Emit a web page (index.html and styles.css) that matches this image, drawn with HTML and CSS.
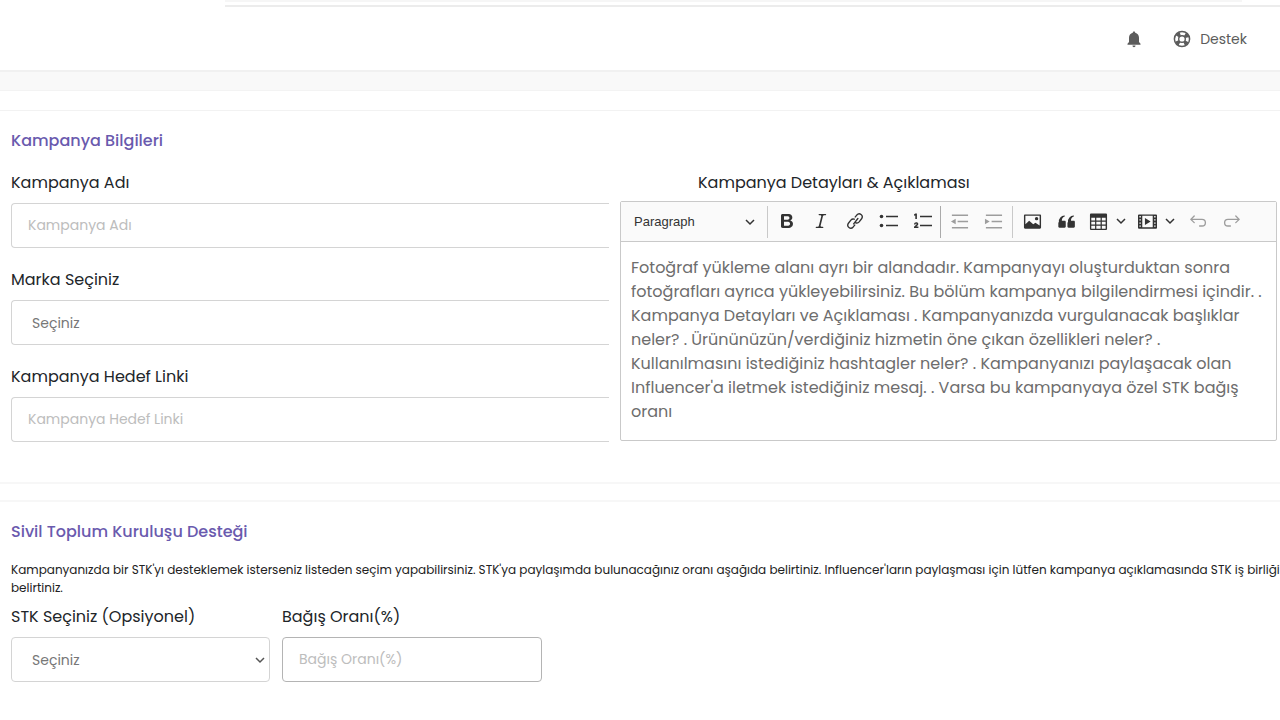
FILE: index.html
```html
<!DOCTYPE html>
<html lang="tr">
<head>
<meta charset="utf-8">
<meta name="viewport" content="width=device-width, initial-scale=1">
<title>Kampanya Bilgileri</title>
<link rel="stylesheet" href="styles.css">
</head>
<body>
<div class="tabstrip"><div class="tabstrip-inner"></div></div>
<header class="topbar">
  <button class="bell" type="button" aria-label="Bildirimler">
    <svg width="16" height="18" viewBox="0 0 16 18"><path d="M8 1.500c.8 0 1.200.5 1.200 1.200C11.600 3.200 13 5.200 13 7.700v4.300l1.500 1.800v.9h-13v-.9L3 12V7.700c0-2.500 1.400-4.500 3.800-5C6.800 2 7.200 1.500 8 1.500zM6.500 15.500h3c0 1-.6 1.700-1.500 1.700s-1.500-.7-1.500-1.700z" fill="#5c5c5c"/></svg>
  </button>
  <a class="support" href="#">
    <svg width="18" height="18" viewBox="0 0 18 18" fill="none" stroke="#5c5c5c"><circle cx="9" cy="9" r="7.600" stroke-width="1.500"/><circle cx="9" cy="9" r="3.300" stroke-width="1.400"/><circle cx="9" cy="9" r="5.500" stroke-width="3.800" stroke-dasharray="3.600 5.040" stroke-dashoffset="-2.520"/></svg>
    <span>Destek</span>
  </a>
</header>
<div class="band"></div>
<main>
  <section class="card details">
    <h2>Kampanya Bilgileri</h2>
    <div class="columns">
      <div class="fields">
        <div class="field">
          <label for="name">Kampanya Adı</label>
          <input class="control cut" id="name" type="text" placeholder="Kampanya Adı">
        </div>
        <div class="field">
          <label for="brand">Marka Seçiniz</label>
          <select class="control cut" id="brand"><option>Seçiniz</option></select>
        </div>
        <div class="field">
          <label for="link">Kampanya Hedef Linki</label>
          <input class="control cut" id="link" type="text" placeholder="Kampanya Hedef Linki">
        </div>
      </div>
      <div class="editor-column">
        <span class="editor-label" id="editor-label">Kampanya Detayları &amp; Açıklaması</span>
        <div class="editor">
          <div class="toolbar" role="toolbar" aria-label="Metin araçları">
            <button class="style-menu" type="button"><span>Paragraph</span><svg class="chevron" viewBox="0 0 10 10"><path d="M1 3l4 4 4-4"/></svg></button>
            <span class="rule"></span>
            <button class="tool" type="button" aria-label="Bold"><svg class="big" viewBox="0 0 20 20"><path d="M10.187 17H5.773c-.637 0-1.092-.138-1.364-.415-.273-.277-.409-.718-.409-1.323V4.738c0-.617.140-1.062.419-1.332.279-.27.730-.406 1.354-.406h4.680c.690 0 1.288.041 1.793.124.506.083.960.242 1.360.478.341.197.644.447.906.750a3.262 3.262 0 0 1 .808 2.162c0 1.401-.722 2.426-2.167 3.075C15.050 10.175 16 11.315 16 13.010a3.756 3.756 0 0 1-2.296 3.504 6.100 6.100 0 0 1-1.517.377c-.571.073-1.238.110-2 .110zm-.217-6.217H7v4.087h3.069c1.977 0 2.965-.690 2.965-2.072 0-.707-.256-1.220-.768-1.537-.512-.319-1.277-.478-2.296-.478zM7 5.130v3.619h2.606c.729 0 1.292-.067 1.690-.200a1.600 1.600 0 0 0 .910-.765c.165-.267.247-.566.247-.897 0-.707-.260-1.176-.778-1.409-.519-.232-1.310-.348-2.375-.348H7z"/></svg></button>
            <button class="tool" type="button" aria-label="Italic"><svg class="big" viewBox="0 0 20 20"><path d="M9.586 14.633l.021.004c-.036.335.095.655.393.962.082.083.173.150.274.201h1.474a.6.6 0 1 1 0 1.200H5.304a.6.6 0 0 1 0-1.200h1.150c.474-.070.809-.182 1.005-.334.157-.122.291-.320.404-.597l2.416-9.550a1.053 1.053 0 0 0-.281-.823 1.120 1.120 0 0 0-.442-.296H8.150a.6.6 0 0 1 0-1.200h6.443a.6.6 0 1 1 0 1.200h-1.195c-.376.056-.650.155-.823.296-.215.175-.423.439-.623.790l-2.366 9.347z"/></svg></button>
            <button class="tool" type="button" aria-label="Link"><svg class="line" viewBox="0 0 20 20"><path d="M8.500 13.200l4.700-6M10.300 5.500l1.700-2.100c3-3.300 7.800.5 5.300 4.100l-2.700 3.500c-1 1.200-2.500 1.500-3.800 1M9.700 14.500L8 16.600c-3 3.300-7.800-.5-5.300-4.100L5.400 9c1-1.200 2.500-1.500 3.800-1"/></svg></button>
            <button class="tool" type="button" aria-label="Bulleted list"><svg class="big" viewBox="0 0 20 20"><circle cx="2.500" cy="5.500" r="1.800"/><circle cx="2.500" cy="14.500" r="1.800"/><path d="M7 4.700h12v1.600H7zM7 13.700h12v1.600H7z"/></svg></button>
            <button class="tool" type="button" aria-label="Numbered list"><svg class="big" viewBox="0 0 20 20"><path d="M7 4.700h12v1.600H7zM7 13.700h12v1.600H7zM2.400 2.500h1.500v5.600H2.300V4.400l-1.200.4V3.300zM1 13.400c.1-1.500 1-2.200 2.200-2.200s2.100.7 2.100 1.700c0 .8-.4 1.300-1.900 2.500h2V17H1v-1.300c2-1.600 2.500-2.100 2.500-2.600 0-.7-.9-.7-1 .3z"/></svg></button>
            <span class="rule dark"></span>
            <button class="tool" type="button" aria-label="Decrease indent" disabled><svg viewBox="0 0 20 20"><path d="M2 2.700h17v1.600H2zM8 9.200h11v1.600H8zM2 15.700h17v1.600H2zM6 7v6l-5-3z"/></svg></button>
            <button class="tool" type="button" aria-label="Increase indent" disabled><svg viewBox="0 0 20 20"><path d="M2 2.700h17v1.600H2zM8 9.200h11v1.600H8zM2 15.700h17v1.600H2zM1 7v6l5-3z"/></svg></button>
            <span class="rule end"></span>
            <button class="tool" type="button" aria-label="Image"><svg viewBox="0 0 20 20"><path fill-rule="evenodd" d="M2.200 2.500h15.600c.8 0 1.200.4 1.200 1.200v12.600c0 .8-.4 1.200-1.200 1.200H2.200c-.8 0-1.200-.4-1.200-1.200V3.700c0-.8.400-1.200 1.200-1.200zM2.500 4v8.800l4-3.600 4.300 3.700 2.300-1.700 4.400 3V4zM14.300 5.200a1.800 1.800 0 1 1 0 3.600 1.800 1.800 0 0 1 0-3.600z"/></svg></button>
            <button class="tool" type="button" aria-label="Block quote"><svg viewBox="0 0 20 20"><path d="M2 10.400a6.200 6.200 0 0 1 5.800-6.700c.7 0 .8.900.1 1.100-2.100.6-2.900 2.600-2.800 4.400H8c.8 0 1.200.4 1.200 1.200V15.300c0 .8-.4 1.200-1.200 1.200H2.600c-.8 0-1.200-.4-1.200-1.200v-3.700c0-.5.200-.9.600-1.200zM11.600 10.400a6.200 6.200 0 0 1 5.800-6.700c.7 0 .8.900.1 1.100-2.100.6-2.900 2.600-2.800 4.400h2.900c.8 0 1.200.4 1.200 1.200V15.300c0 .8-.4 1.200-1.200 1.200h-5.400c-.8 0-1.200-.4-1.200-1.200v-3.700c0-.5.200-.9.600-1.200z"/></svg></button>
            <button class="tool split" type="button" aria-label="Insert table"><svg viewBox="0 0 20 20"><path fill-rule="evenodd" d="M2.500 1.500h15c1 0 1.500.5 1.500 1.500v14.600c0 .9-.5 1.400-1.500 1.400h-15c-1 0-1.500-.5-1.500-1.400V3C1 2 1.500 1.500 2.500 1.500zM2.400 6v2.900h4V6zM7.700 6v2.900h4.500V6zM13.500 6v2.900h4V6zM2.400 10.200v3h4v-3zM7.700 10.200v3h4.500v-3zM13.500 10.200v3h4v-3zM2.400 14.500v3h4v-3zM7.700 14.500v3h4.500v-3zM13.500 14.500v3h4v-3z"/></svg><svg class="chevron" viewBox="0 0 10 10"><path d="M1 3l4 4 4-4"/></svg></button>
            <button class="tool split" type="button" aria-label="Insert media"><svg viewBox="0 0 20 20"><path fill-rule="evenodd" d="M1 2.500h18c.6 0 1 .4 1 1v13c0 .6-.4 1-1 1H1c-.6 0-1-.4-1-1v-13c0-.6.400-1 1-1zM4.500 4v12h11V4zM1.500 4.300v1.400H3V4.300zM1.500 7.600V9H3V7.600zM1.500 11v1.400H3V11zM1.500 14.200v1.400H3v-1.400zM17 4.300v1.400h1.500V4.300zM17 7.600V9h1.500V7.600zM17 11v1.400h1.500V11zM17 14.200v1.400h1.500v-1.400zM7.300 6.300v7.400l6-3.700z"/></svg><svg class="chevron" viewBox="0 0 10 10"><path d="M1 3l4 4 4-4"/></svg></button>
            <button class="tool" type="button" aria-label="Undo" disabled><svg class="line" viewBox="0 0 20 20"><path d="M5.800 4.500L2 8.200l3.800 3.600M2.200 8.200h12.300a3.700 3.700 0 0 1 0 7.400h-2.700"/></svg></button>
            <button class="tool" type="button" aria-label="Redo" disabled><svg class="line" viewBox="0 0 20 20"><path d="M14.200 4.500L18 8.200l-3.800 3.600M17.800 8.200H5.500a3.700 3.700 0 0 0 0 7.400h2.700"/></svg></button>
          </div>
          <div class="editor-body" role="textbox" aria-multiline="true" aria-labelledby="editor-label" contenteditable="true" spellcheck="false">Fotoğraf yükleme alanı ayrı bir alandadır. Kampanyayı oluşturduktan sonra<br>fotoğrafları ayrıca yükleyebilirsiniz. Bu bölüm kampanya bilgilendirmesi içindir. .<br>Kampanya Detayları ve Açıklaması . Kampanyanızda vurgulanacak başlıklar<br>neler? . Ürününüzün/verdiğiniz hizmetin öne çıkan özellikleri neler? .<br>Kullanılmasını istediğiniz hashtagler neler? . Kampanyanızı paylaşacak olan<br>Influencer'a iletmek istediğiniz mesaj. . Varsa bu kampanyaya özel STK bağış<br>oranı</div>
        </div>
      </div>
    </div>
  </section>
  <section class="card charity">
    <h2>Sivil Toplum Kuruluşu Desteği</h2>
    <p class="note">Kampanyanızda bir STK'yı desteklemek isterseniz listeden seçim yapabilirsiniz. STK'ya paylaşımda bulunacağınız oranı aşağıda belirtiniz. Influencer'ların paylaşması için lütfen kampanya açıklamasında STK iş birliği<br>belirtiniz.</p>
    <div class="row">
      <div class="field">
        <label for="ngo">STK Seçiniz (Opsiyonel)</label>
        <div class="select-wrap">
          <select class="control" id="ngo"><option>Seçiniz</option></select>
          <svg class="chevron select-arrow" viewBox="0 0 10 10"><path d="M1 3l4 4 4-4"/></svg>
        </div>
      </div>
      <div class="field">
        <label for="rate">Bağış Oranı(%)</label>
        <input class="control strong" id="rate" type="text" placeholder="Bağış Oranı(%)">
      </div>
    </div>
  </section>
</main>
</body>
</html>
```
FILE: styles.css
```css
* { box-sizing: border-box; }
body {
  margin: 0;
  background: #fff;
  color: #212529;
  font-family: Poppins, Inter, sans-serif;
  font-size: 16px;
  line-height: 24px;
  overflow-x: hidden;
}
button { border: 0; padding: 0; background: none; font: inherit; color: inherit; }
svg { display: block; flex: none; }

.tabstrip { height: 7px; margin-left: 225px; border-bottom: 2px solid #ececec; }
.tabstrip-inner { height: 2px; margin-right: 38px; background: #f6f6f6; }

.topbar {
  display: flex;
  align-items: center;
  justify-content: flex-end;
  gap: 31px;
  height: 63px;
  padding-right: 33px;
  color: #5c5c5c;
  font-size: 14px;
}
.support { display: flex; align-items: center; gap: 9px; color: inherit; text-decoration: none; }

.band {
  height: 21px;
  background: #f9f9f9;
  border-top: 2px solid #f1f1f1;
  border-bottom: 1px solid #f3f3f3;
}

.card { padding: 18px 0 0 11px; border-top: 1px solid #f2f2f2; }
.details { margin-top: 19px; padding-bottom: 40px; border-bottom: 2px solid #f7f7f7; }
.charity { margin-top: 16px; border-top: 2px solid #f7f7f7; }
h2 { margin: 0; color: #6a5aae; font-size: 16px; font-weight: 500; line-height: 24px; }

.columns { display: grid; grid-template-columns: 598fr 660fr; gap: 11px; margin-top: 18px; }
.fields { display: flex; flex-direction: column; gap: 20px; }
.field { display: flex; flex-direction: column; gap: 8px; }
.control {
  width: 100%;
  height: 45px;
  padding: 0 16px;
  border: 1px solid #d4d4d4;
  border-radius: 4px;
  background: #fff;
  color: #777;
  font: inherit;
  font-size: 14px;
}
select.control { display: block; appearance: none; padding-left: 20px; }
.control.cut { border-right: 0; border-radius: 4px 0 0 4px; }
.control.strong { border-color: #b4b4b4; }
.control::placeholder { color: #bdbdbd; opacity: 1; }

.editor-column { display: flex; flex-direction: column; align-items: stretch; gap: 6px; padding-right: 3px; }
.editor-label { padding-left: 78px; }
.editor { border: 1px solid #c9c9c9; border-radius: 2px; }
.toolbar {
  display: flex;
  align-items: center;
  height: 40px;
  padding-left: 13px;
  background: #fafafa;
  border-bottom: 1px solid #c9c9c9;
  color: #333;
}
.style-menu {
  display: flex;
  align-items: center;
  justify-content: space-between;
  width: 121px;
  margin-right: 12px;
  font-family: "Liberation Sans", Arial, sans-serif;
  font-size: 13px;
}
.rule { width: 1px; height: 32px; margin-right: 2px; background: #c9c9c9; }
.rule.dark { margin-right: 1px; background: #aaa; }
.rule.end { margin-left: 2px; }
.tool { display: flex; align-items: center; justify-content: center; gap: 8px; width: 34px; height: 32px; padding-bottom: 1px; }
.tool.split { width: 49px; }
.tool svg { width: 19px; height: 19px; fill: currentColor; }
.tool svg.big { width: 20px; height: 20px; }
.tool:disabled { color: #9d9d9d; }
.tool svg.line { width: 18px; height: 18px; fill: none; stroke: currentColor; stroke-width: 1.5; stroke-linecap: round; stroke-linejoin: round; }
.chevron, .tool svg.chevron { width: 10px; height: 10px; fill: none; stroke: currentColor; stroke-width: 1.5; }
.editor-body { padding: 14px 10px 16px; color: #6d6d6d; outline: 0; white-space: nowrap; }

.note { margin: 17px 0 8px; color: #222; font-size: 12px; line-height: 18px; white-space: nowrap; }
.row { display: grid; grid-template-columns: 259fr 260fr 726fr; gap: 12px; }
.select-wrap { position: relative; }
.select-arrow { position: absolute; right: 5px; top: 18px; color: #555; pointer-events: none; }
```
